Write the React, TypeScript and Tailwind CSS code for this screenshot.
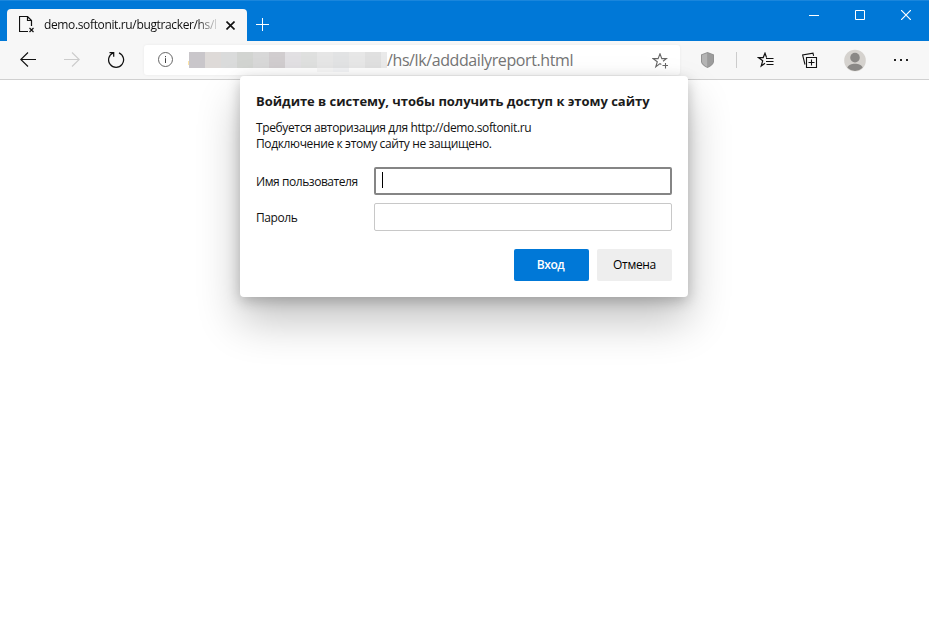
import React from 'react';

const mosaic = ['#c9c6ca','#dedad8','#dadbdb','#d2d4d1','#d8d8d8','#d1cdcf','#e2e0e3','#dfe0df','#e6e6e6','#e2e3e4','#e7e7e7','#e0e0e0','#eaeaea'];

function TitleBar() {
  return (
    <header className="flex h-[41px] shrink-0 items-start border-t border-[#1a86dc] bg-[#0078d7] pl-[7px]">
      <div className="mt-2 flex h-8 w-60 items-center rounded-t-[4px] bg-[#f7f7f7] pl-3">
        <svg className="-mt-px h-[18px] w-[17px] shrink-0" viewBox="0 0 17 18" fill="none" stroke="#111">
          <path d="M9 15.5H.5V.5H8.5L12.5 4.5V10M8.5 .5V4.5H12.5" strokeWidth="1.2" />
          <path d="M10.5 12l4 4M14.5 12L10.5 16" strokeWidth="1.2" />
        </svg>
        <div className="ml-2 w-[174px] whitespace-nowrap text-[12px] leading-4 text-[#111] [mask-image:linear-gradient(to_right,black_152px,transparent_176px)]">
          <span className="tracking-[-0.36px]">demo.softonit.ru/bugtracker/hs/l</span>
        </div>
        <svg className="ml-[8px] h-[9px] w-[9px] shrink-0" viewBox="0 0 9 9" stroke="#111" strokeWidth="1.6">
          <path d="M.5 .5l8 8M8.5 .5l-8 8" />
        </svg>
      </div>
      <svg className="ml-[9px] mt-[17px] h-[13px] w-[13px]" viewBox="0 0 13 13" stroke="#fff">
        <path d="M0 6.5h13M6.5 0v13" />
      </svg>
      <div className="ml-auto mr-[18px] mt-[9px] flex gap-[36px]">
        <svg className="h-[10px] w-[10px]" viewBox="0 0 10 10" stroke="#fff"><path d="M0 5.5h10" /></svg>
        <svg className="h-[10px] w-[10px]" viewBox="0 0 10 10" fill="none" stroke="#fff"><path d="M.5 .5h9v9h-9z" /></svg>
        <svg className="h-[10px] w-[10px]" viewBox="0 0 10 10" stroke="#fff" strokeWidth="1.2"><path d="M0 0l10 10M10 0L0 10" /></svg>
      </div>
    </header>
  );
}

function Toolbar() {
  return (
    <nav className="flex h-[39px] shrink-0 items-start border-b border-[#d0d0d0] bg-[#f7f7f7] pt-1">
      <svg className="ml-5 mt-[7px] h-4 w-4 shrink-0" viewBox="0 0 16 16" fill="none" stroke="#111" strokeWidth="1.1"><path d="M16 7.5H.8M8 .5l-7.2 7 7.2 7" /></svg>
      <svg className="ml-7 mt-[7px] h-4 w-4 shrink-0" viewBox="0 0 16 16" fill="none" stroke="#ccc" strokeWidth="1.1"><path d="M0 7.5h15.2M8 .5l7.2 7-7.2 7" /></svg>
      <svg className="ml-7 mt-[6px] h-[18px] w-[17px] shrink-0" viewBox="0 0 17 18" fill="none" stroke="#111" strokeWidth="1.25"><path d="M11 1.9A7.5 7.5 0 1 1 5.2 1.9M1.5 1.5H5.7V5.8" /></svg>
      <div className="ml-[19px] flex h-[30px] w-[536px] shrink-0 items-start rounded-[3px] bg-white pl-[14px] shadow-[0_0_3px_rgba(0,0,0,0.06)]">
        <svg className="mt-[7px] h-[15px] w-[15px] shrink-0" viewBox="0 0 15 15" fill="none" stroke="#666"><circle cx="7.5" cy="7.5" r="7" /><path d="M7.5 6.2V11M7.5 4v1.2" stroke="#444" /></svg>
        <div className="ml-[15px] mt-[16px] h-1 w-px bg-[#ffe5a5]" />
        <div className="mt-[7px] flex h-5 w-[198px] flex-col">
          <div className="flex h-4">
            {mosaic.map((c, i) => <div key={i} className={i === 12 ? 'w-[6px]' : 'w-4'} style={{ backgroundColor: c }} />)}
          </div>
          <div className="ml-[128px] flex h-1"><div className="w-4 bg-[#f7f7f7]" /><div className="w-4 bg-[#f3f4f6]" /></div>
        </div>
        <span className="mt-[5px] w-[188px] whitespace-nowrap text-[16px] leading-[21px] tracking-[-0.4px] text-[#757575]">/hs/lk/adddailyreport.html</span>
        <svg className="ml-[77px] mt-[8px] h-4 w-4 shrink-0" viewBox="0 0 16 16" fill="none" stroke="#666">
          <path d="M9.3 11.5L8 10.6 3.8 13.8l1.5-5.1L1.2 5.6h4.9L8 .8l1.8 4.8h4.6L11 8.3M10.5 12.5h5.5M13.5 10v5.5" strokeWidth="1.1" />
        </svg>
      </div>
      <svg className="ml-[21px] mt-[7px] h-4 w-[13px] shrink-0" viewBox="0 0 13 16"><path d="M6.5 0L13 2.5V10Q12 13.5 6.5 16Q1 13.5 0 10V2.5Z" fill="#929292" /><path d="M6.5 1L1 3V10Q2 13 6.5 15Z" fill="#b4b4b4" /><path d="M6.5 1L12 3V10Q11 13 6.5 15Z" fill="#9c9c9c" /></svg>
      <div className="ml-[22px] mt-[7px] h-4 w-px bg-[#ccc]" />
      <svg className="ml-[20px] mt-[7px] h-4 w-[17px] shrink-0" viewBox="0 0 17 16" fill="none" stroke="#111" strokeWidth="1.2">
        <path d="M8 11.3L4.2 14l1.5-5.2L1.5 5.6H6.2L8 1.2l1.6 4.4M9 6.5h7.5M9 9.5h7.5M9.5 12.5h7" />
      </svg>
      <svg className="ml-[28px] mt-[7px] h-4 w-4 shrink-0" viewBox="0 0 16 16" fill="none" stroke="#111" strokeWidth="1.1">
        <path d="M4.5 5.5h10v10h-10zM9.5 7.5v6M6.5 10.5h6M3 12.5L.6 3 11 1.2l.6 2.6" />
      </svg>
      <svg className="ml-[26px] mt-[4px] h-[23px] w-[22px] shrink-0" viewBox="0 0 23 23">
        <circle cx="11.5" cy="11.5" r="11.3" fill="#d5d2ce" /><circle cx="11.5" cy="8.5" r="5" fill="#8a8886" /><path d="M3.5 19C5 13.5 18 13.5 19.5 19Q11.5 26 3.5 19" fill="#8a8886" />
      </svg>
      <svg className="ml-[28px] mt-[14px] h-[2px] w-[16px] shrink-0" viewBox="0 0 16 2" fill="#222"><path d="M0 0h2v2H0zM6 0h2v2H6zM12 0h2v2h-2z" /></svg>
    </nav>
  );
}

function LoginDialog() {
  return (
    <section role="dialog" className="absolute left-[240px] top-[76px] flex h-[221px] w-[448px] flex-col rounded-[4px] bg-white px-4 pt-4 shadow-[0_24px_44px_rgba(0,0,0,0.24),0_4px_14px_rgba(0,0,0,0.22)]">
      <h1 className="whitespace-nowrap text-[13px] font-bold leading-[18px] tracking-[-0.035px] text-[#1b1b1b]">Войдите в систему, чтобы получить доступ к этому сайту</h1>
      <p className="mt-[10px] whitespace-nowrap text-[12px] leading-4 tracking-[-0.37px] text-[#111]"><span>Требуется авторизация для http://demo.softonit.ru</span><br /><span>Подключение к этому сайту не защищено.</span></p>
      <form className="mt-[15px] flex flex-col gap-2">
        <label className="flex h-7 items-center text-[12px] text-[#111]">
          <span className="w-[118px] whitespace-nowrap pt-[2px] tracking-[-0.44px]">Имя пользователя</span>
          <span className="flex h-7 w-[298px] items-start rounded-[2px] border-2 border-[#858585] pl-[6px] pt-[3px]"><span className="h-4 w-px bg-black" /></span>
        </label>
        <label className="flex h-7 items-center text-[12px] text-[#111]">
          <span className="w-[118px] pt-[2px] tracking-[-0.4px]">Пароль</span>
          <span className="h-7 w-[298px] rounded-[2px] border border-[#c8c8c8]" />
        </label>
        <div className="mt-[10px] flex justify-end gap-2 text-[12px]">
          <button type="button" className="h-8 w-[75px] rounded-[2px] bg-[#0078d7] pr-[2px] font-semibold tracking-[-0.5px] text-white">Вход</button>
          <button type="button" className="h-8 w-[75px] rounded-[2px] bg-[#eee] tracking-[-0.3px] text-black">Отмена</button>
        </div>
      </form>
    </section>
  );
}

export default function App() {
  return (
    <div className="relative flex h-[644px] w-[929px] flex-col overflow-hidden bg-white font-['Open_Sans','Noto_Sans',sans-serif]">
      <TitleBar />
      <Toolbar />
      <main className="flex-1 bg-white"><LoginDialog /></main>
    </div>
  );
}
